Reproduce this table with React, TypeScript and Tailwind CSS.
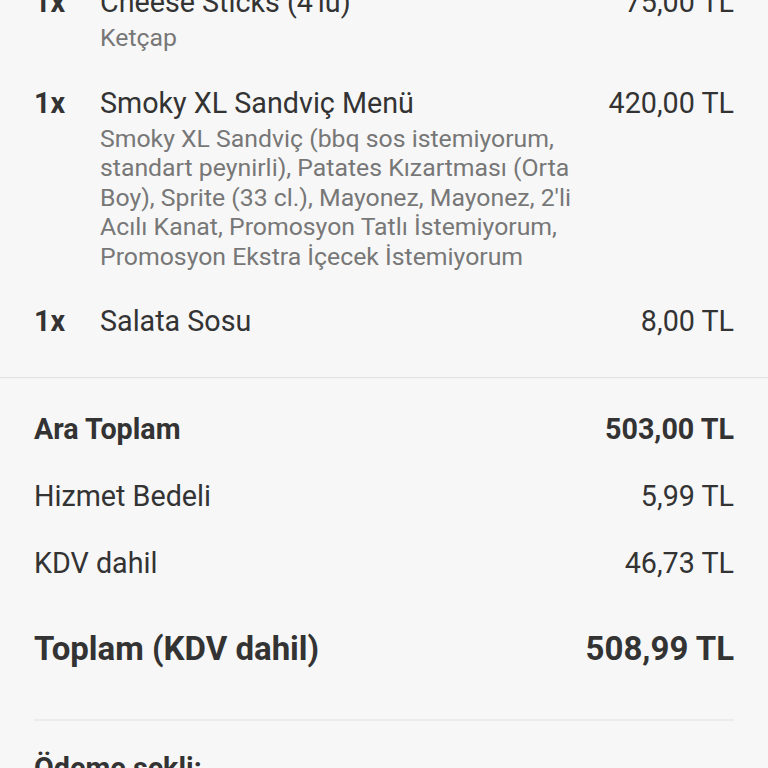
const items = [
  { qty: "1x", name: "Cheese Sticks (4'lü)", desc: "Ketçap", price: "75,00 TL" },
  {
    qty: "1x",
    name: "Smoky XL Sandviç Menü",
    desc:
      "Smoky XL Sandviç (bbq sos istemiyorum, standart peynirli), Patates Kızartması (Orta Boy), Sprite (33 cl.), Mayonez, Mayonez, 2'li Acılı Kanat, Promosyon Tatlı İstemiyorum, Promosyon Ekstra İçecek İstemiyorum",
    price: "420,00 TL",
  },
  { qty: "1x", name: "Salata Sosu", desc: "", price: "8,00 TL" },
];

export default function App() {
  return (
    <div
      className="h-[768px] overflow-hidden bg-[#f7f7f7] text-[#333333]"
      style={{ fontFamily: "Roboto, 'Noto Sans', sans-serif" }}
    >
      <div className="mt-[-32px] px-[34px] pb-[22px]">
        {items.map((item, i) => (
          <div key={i} className="flex py-4">
            <div className="w-[66px] shrink-0 text-[28.7px] font-bold leading-[36px]">{item.qty}</div>
            <div className="w-[492px] shrink-0">
              <p className="text-[28.7px] leading-[36px]">{item.name}</p>
              {item.desc && (
                <p className="mt-[3px] text-[24.8px] leading-[29.5px] text-[#777777]">{item.desc}</p>
              )}
            </div>
            <div className="flex-1 text-right text-[28.7px] leading-[36px]">{item.price}</div>
          </div>
        ))}
      </div>

      <div className="border-t border-[#e3e3e3] shadow-[0_1px_2px_rgba(0,0,0,0.03)]" />

      <div className="px-[34px] pt-[17px]">
        <div className="flex justify-between py-[15.5px] text-[28.7px] font-bold leading-[36px]">
          <span>Ara Toplam</span>
          <span>503,00 TL</span>
        </div>
        <div className="flex justify-between py-[15.5px] text-[28.7px] leading-[36px]">
          <span>Hizmet Bedeli</span>
          <span>5,99 TL</span>
        </div>
        <div className="flex justify-between py-[15.5px] text-[28.7px] leading-[36px]">
          <span>KDV dahil</span>
          <span>46,73 TL</span>
        </div>
        <div className="flex justify-between pt-[33px] text-[33px] font-bold leading-[40px]">
          <span>Toplam (KDV dahil)</span>
          <span>508,99 TL</span>
        </div>
        <div className="mt-[50px] border-t-2 border-[#ececec]" />
        <p className="pt-[29px] text-[28.7px] font-bold leading-[36px]">Ödeme şekli:</p>
      </div>
    </div>
  );
}
